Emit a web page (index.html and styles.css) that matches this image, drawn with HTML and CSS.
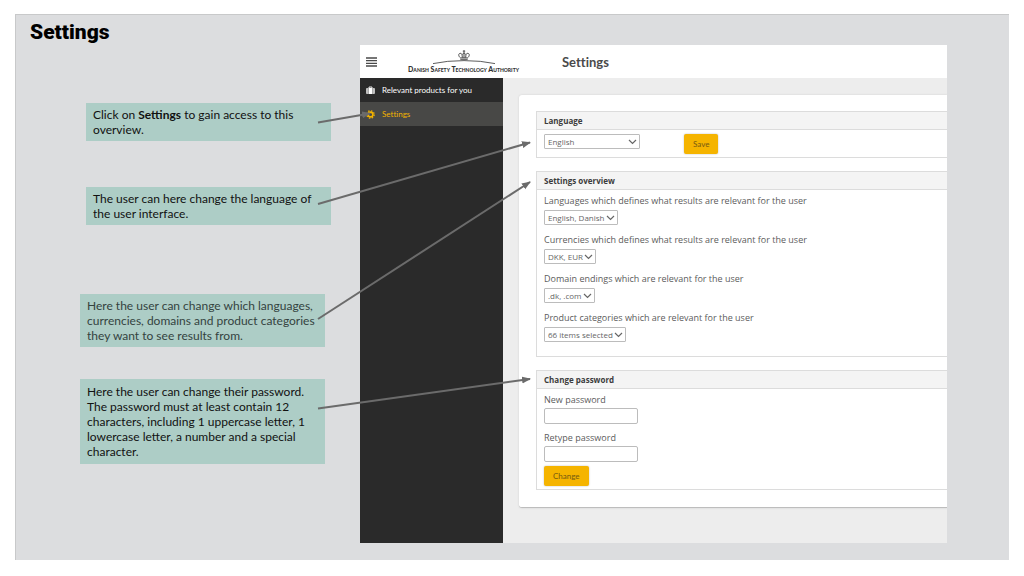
FILE: index.html
```html
<!DOCTYPE html>
<html lang="en">
<head>
<meta charset="utf-8">
<title>Settings</title>
<link rel="stylesheet" href="styles.css">
</head>
<body>
<main class="slide">
  <section class="guide">
    <h1 class="slide-title">Settings</h1>
    <div class="notes">
      <p class="note note-open">Click on <strong>Settings</strong> to gain access to this overview.</p>
      <p class="note note-language">The user can here change the language of the user interface.</p>
      <p class="note note-overview">Here the user can change which languages, currencies, domains and product categories they want to see results from.</p>
      <p class="note note-password">Here the user can change their password. The password must at least contain 12 characters, including 1 uppercase letter, 1 lowercase letter, a number and a special character.</p>
    </div>
  </section>

  <section class="app">
    <header class="app-header">
      <button class="menu-button" type="button" aria-label="Menu">
        <svg width="11" height="10" viewBox="0 0 11 10"><path d="M0 1h11M0 3.7h11M0 6.3h11M0 9h11" stroke="#4a4a4a" stroke-width="1.3"/></svg>
      </button>
      <div class="brand">
        <svg class="crest" width="64" height="15" viewBox="0 0 64 15" fill="none" stroke="#4c4c4c">
          <path d="M1 13.6Q15 10.6 32 10.6T63 13.6" stroke-width=".9"/>
          <path d="M28.3 9.3h7.4M28.6 8C26.2 6.2 26.2 3.5 28.2 3.3 29.9 3.2 30.3 5 30.3 7.8M35.4 8C37.8 6.2 37.8 3.5 35.8 3.3 34.1 3.2 33.7 5 33.7 7.8M32 2.4V8M30.3 4.6Q32 1.5 33.7 4.6M28.5 7.9h7" stroke-width="1"/>
          <path d="M32 0v2.6M30.8 1.2h2.4" stroke-width=".9"/>
        </svg>
        <span class="brand-name">Danish Safety Technology Authority</span>
      </div>
      <h2 class="app-title">Settings</h2>
    </header>
    <div class="app-body">
      <nav class="sidebar">
        <a class="nav-item" href="#products">
          <svg width="9" height="9" viewBox="0 0 9 9"><path d="M3 2V1h3v1" fill="none" stroke="#fff" stroke-width=".9"/><path d="M1.7 2v6H1Q.3 8 .3 7.3V2.7Q.3 2 1 2ZM2.4 2h4.2v6H2.4ZM7.3 2H8q.7 0 .7.7v4.6Q8.7 8 8 8h-.7Z" fill="#fff"/></svg>
          Relevant products for you
        </a>
        <a class="nav-item nav-item-active" href="#settings">
          <svg width="9" height="9" viewBox="0 0 9 9" fill="none" stroke="#f2b200"><circle cx="4.5" cy="4.5" r="2.4" stroke-width="1.6"/><circle cx="4.5" cy="4.5" r="3.7" stroke-width="1.3" stroke-dasharray="1.5 1.406"/></svg>
          Settings
        </a>
      </nav>
      <div class="content">
        <div class="card">
          <section class="panel">
            <h3 class="panel-title">Language</h3>
            <form class="panel-body language-form">
              <span class="picker picker-wide">
                <select aria-label="Language"><option>English</option></select>
                <svg class="chevron" width="9" height="6" viewBox="0 0 9 6"><path d="M1 1 4.5 4.5 8 1"/></svg>
              </span>
              <button class="button" type="button">Save</button>
            </form>
          </section>

          <section class="panel">
            <h3 class="panel-title">Settings overview</h3>
            <form class="panel-body overview-form">
              <div class="field">
                <label for="languages">Languages which defines what results are relevant for the user</label>
                <span class="picker"><select id="languages"><option>English, Danish</option></select>
                <svg class="chevron" width="9" height="6" viewBox="0 0 9 6"><path d="M1 1 4.5 4.5 8 1"/></svg></span>
              </div>
              <div class="field">
                <label for="currencies">Currencies which defines what results are relevant for the user</label>
                <span class="picker"><select id="currencies"><option>DKK, EUR</option></select>
                <svg class="chevron" width="9" height="6" viewBox="0 0 9 6"><path d="M1 1 4.5 4.5 8 1"/></svg></span>
              </div>
              <div class="field">
                <label for="domains">Domain endings which are relevant for the user</label>
                <span class="picker"><select id="domains"><option>.dk, .com</option></select>
                <svg class="chevron" width="9" height="6" viewBox="0 0 9 6"><path d="M1 1 4.5 4.5 8 1"/></svg></span>
              </div>
              <div class="field">
                <label for="categories">Product categories which are relevant for the user</label>
                <span class="picker"><select id="categories"><option>66 items selected</option></select>
                <svg class="chevron" width="9" height="6" viewBox="0 0 9 6"><path d="M1 1 4.5 4.5 8 1"/></svg></span>
              </div>
            </form>
          </section>

          <section class="panel">
            <h3 class="panel-title">Change password</h3>
            <form class="panel-body password-form">
              <div class="password-fields">
                <div class="password-field">
                  <label for="new-password">New password</label>
                  <input id="new-password" type="password">
                </div>
                <div class="password-field">
                  <label for="retype-password">Retype password</label>
                  <input id="retype-password" type="password">
                </div>
              </div>
              <button class="button" type="button">Change</button>
            </form>
          </section>
        </div>
      </div>
    </div>
  </section>

  <svg class="arrows" width="530" height="410" viewBox="16 15 530 410" aria-hidden="true">
    <defs>
      <marker id="head" markerUnits="userSpaceOnUse" markerWidth="9" markerHeight="8" refX="8" refY="4" orient="auto"><path d="M0 .5 9 4 0 7.5Z" fill="#6b6b6b"/></marker>
    </defs>
    <g stroke="#6b6b6b" stroke-width="2">
      <path d="M318 122.5 370 113.5" marker-end="url(#head)"/>
      <path d="M318 204 530 142.5" marker-end="url(#head)"/>
      <path d="M318 319 530 182" marker-end="url(#head)"/>
      <path d="M318 408.5 530 379" marker-end="url(#head)"/>
    </g>
  </svg>
</main>
</body>
</html>
```
FILE: styles.css
```css
* {
  box-sizing: border-box;
}

body {
  margin: 14px 15px 15px;
  background: #fff;
  font-family: "Open Sans", "Noto Sans", sans-serif;
}

h1, h2, h3, p {
  margin: 0;
}

.slide {
  position: relative;
  display: grid;
  grid-template-columns: 344px 1fr;
  padding: 0 62px 17px 0;
  border-top: 1px solid #c8c9ca;
  border-left: 1px solid #c8c9ca;
  background: #dcdddf;
}

.slide-title {
  padding: 5px 0 0 14px;
  color: #000;
  font: 900 21px/24px Roboto, "Liberation Sans", sans-serif;
}

.notes {
  display: flex;
  flex-direction: column;
  width: 309px;
  padding: 59px 0 0 64px;
}

.note {
  width: 245px;
  padding: 4px 7px;
  background: #adcdc6;
  color: #111;
  font: 12px/15px Lato, Carlito, sans-serif;
}

.note-open,
.note-language {
  margin-left: 6px;
}

.note-language {
  margin-top: 46px;
}

.note-overview {
  margin-top: 69px;
  color: #34433f;
}

.note-password {
  margin-top: 32px;
  padding-top: 5px;
  padding-bottom: 5px;
}

.app {
  display: flex;
  flex-direction: column;
  min-width: 0;
  margin-top: 30px;
  overflow: hidden;
  background: #ededed;
}

.app-header {
  display: flex;
  align-items: center;
  height: 33px;
  padding-left: 6px;
  background: #fff;
}

.menu-button {
  display: flex;
  padding: 0;
  border: 0;
  background: none;
}

.brand {
  display: flex;
  flex-direction: column;
  align-items: center;
  margin-left: 27px;
  width: 119px;
}

.brand-name {
  color: #333;
  font: 900 7px/8px Lato, sans-serif;
  font-variant: small-caps;
  white-space: nowrap;
}

.app-title {
  margin-left: 39px;
  color: #4a4a4a;
  font: bold 13px/16px Lato, sans-serif;
  font-variant-ligatures: none;
}

.app-body {
  display: flex;
  flex: 1;
}

.sidebar {
  flex: none;
  width: 143px;
  background: #2a2a2a;
}

.nav-item {
  display: flex;
  align-items: center;
  gap: 7px;
  height: 24px;
  padding-left: 6px;
  color: #fff;
  font: 8px/12px Lato, sans-serif;
  font-variant-ligatures: none;
  text-decoration: none;
}

.nav-item-active {
  background: #484846;
  color: #f2b200;
}

.content {
  flex: 1;
  min-width: 0;
  padding: 17px 0 35px 16px;
}

.card {
  display: flex;
  flex-direction: column;
  gap: 13px;
  padding: 16px 0 17px 17px;
  border-bottom: 1px solid #bdbdbd;
  border-radius: 3px 0 0 3px;
  background: #fff;
  box-shadow: 0 0 2px #ccc;
}

.panel {
  border: 1px solid #dcdcdc;
  border-right: 0;
}

.panel-title {
  height: 18px;
  padding-left: 7px;
  border-bottom: 1px solid #dcdcdc;
  background: #f4f4f4;
  color: #3c3c3c;
  font-size: 8px;
  font-weight: bold;
  line-height: 17px;
}

.panel-body {
  padding-left: 7px;
}

.language-form {
  display: flex;
  align-items: flex-start;
  gap: 44px;
  padding-top: 4px;
  padding-bottom: 3px;
}

.overview-form {
  display: flex;
  flex-direction: column;
  gap: 7px;
  padding-top: 3px;
  padding-bottom: 14px;
}

.password-form {
  display: flex;
  flex-direction: column;
  align-items: flex-start;
  gap: 4px;
  padding-top: 3px;
  padding-bottom: 3px;
}

.password-fields {
  display: flex;
  flex-direction: column;
  gap: 6px;
}

.field,
.password-field {
  display: flex;
  flex-direction: column;
  align-items: flex-start;
}

.field {
  gap: 1px;
}

label {
  color: #5c5c5c;
  font-size: 9px;
  line-height: 16px;
}

.picker {
  position: relative;
  display: flex;
}

.picker-wide {
  width: 96px;
}

.picker select {
  width: 100%;
  height: 15px;
  padding: 0 12px 0 3px;
  border: 1px solid #bcbcbc;
  border-radius: 1px;
  appearance: none;
  background: #fff;
  color: #666;
  font: 8px/13px "Open Sans", sans-serif;
}

.chevron {
  position: absolute;
  top: 5px;
  right: 3px;
  fill: none;
  stroke: #666;
  stroke-width: 1.2;
  pointer-events: none;
}

input {
  width: 94px;
  height: 16px;
  padding: 0 3px;
  border: 1px solid #bcbcbc;
  border-radius: 2px;
  background: #fff;
  font-size: 8px;
}

.button {
  height: 20px;
  padding: 0 9px;
  border: 0;
  border-radius: 2px;
  background: #f5b400;
  box-shadow: 0 0 2px #bbb;
  color: #765a12;
  font: 8px/20px Lato, sans-serif;
}

.arrows {
  position: absolute;
  top: 0;
  left: 0;
  pointer-events: none;
}
```
